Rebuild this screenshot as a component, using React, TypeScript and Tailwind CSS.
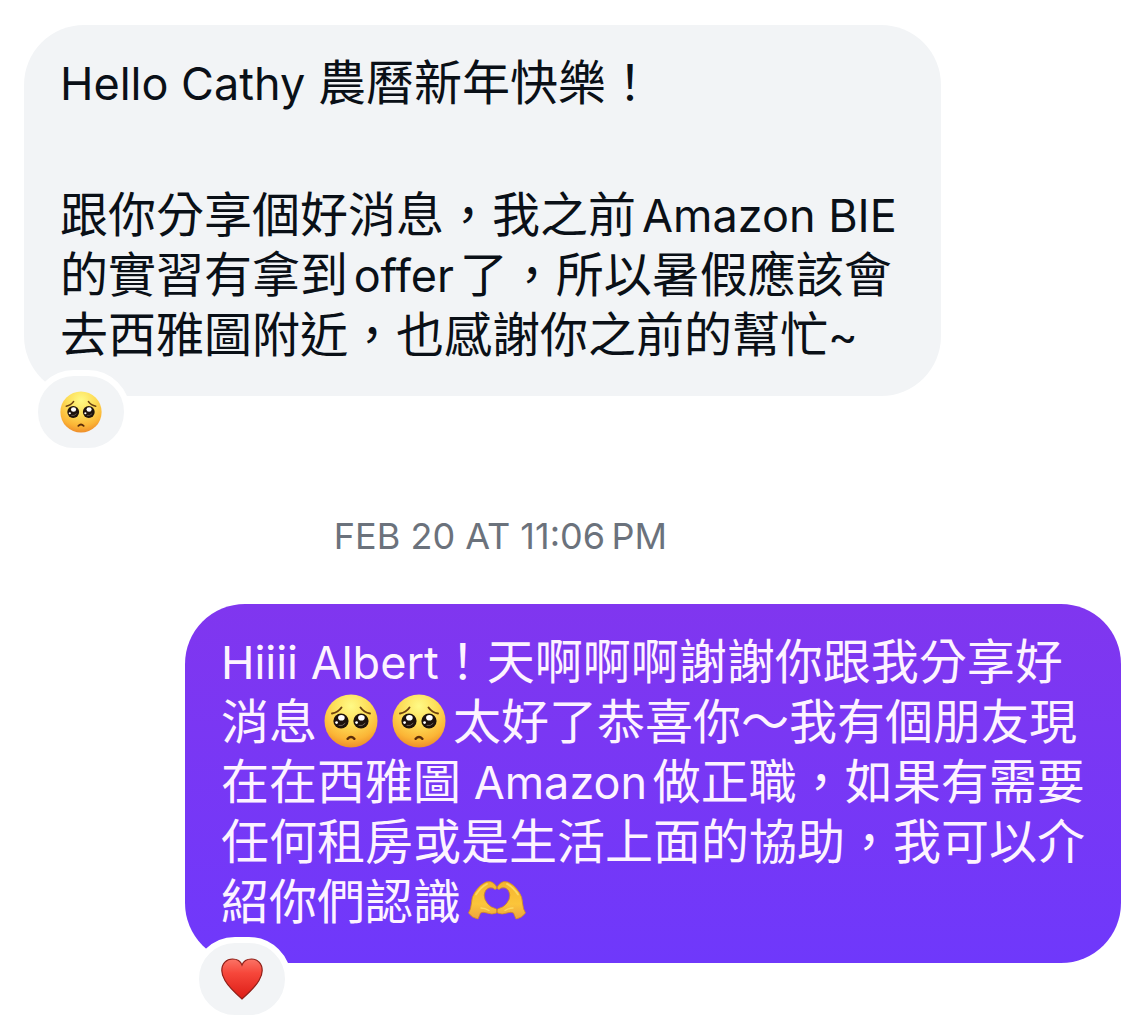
import React from 'react';

const PleadingFace: React.FC<{ className: string }> = ({ className }) => (
  <svg viewBox="0 0 54 54" className={className} role="img" aria-label="pleading face">
    <defs>
      <radialGradient id="face" cx="50%" cy="22%" r="78%">
        <stop offset="0" stopColor="#fffa86" />
        <stop offset="0.45" stopColor="#fddc56" />
        <stop offset="0.8" stopColor="#fbb536" />
        <stop offset="1" stopColor="#ee8d2a" />
      </radialGradient>
    </defs>
    <circle cx="27" cy="27" r="26.5" fill="url(#face)" />
    {/* Brows */}
    <path d="M8 19.5 Q14 18.5 17.5 13.5" stroke="#6b4010" strokeWidth="1.9" fill="none" strokeLinecap="round" />
    <path d="M46 19.5 Q40 18.5 36.5 13.5" stroke="#6b4010" strokeWidth="1.9" fill="none" strokeLinecap="round" />
    {/* Eyes */}
    <circle cx="17" cy="27" r="7.6" fill="#1d120c" />
    <circle cx="37" cy="27" r="7.6" fill="#1d120c" />
    <ellipse cx="17.4" cy="23.8" rx="3.3" ry="2.8" fill="#fff" />
    <ellipse cx="37.4" cy="23.8" rx="3.3" ry="2.8" fill="#fff" />
    <circle cx="12.6" cy="28.6" r="1.4" fill="#fff" />
    <circle cx="32.6" cy="28.6" r="1.4" fill="#fff" />
    <path d="M15 31.5 Q18.5 32.5 21 29.5" stroke="#6e6058" strokeWidth="1" fill="none" strokeLinecap="round" />
    <path d="M35 31.5 Q38.5 32.5 41 29.5" stroke="#6e6058" strokeWidth="1" fill="none" strokeLinecap="round" />
    {/* Mouth */}
    <path d="M23.6 44.8 Q27 41.4 30.4 44.8" stroke="#5a2c0a" strokeWidth="2.4" fill="none" strokeLinecap="round" />
  </svg>
);

const Hand: React.FC = () => (
  <>
    <path
      d="M0.5 33 Q3 29 3.5 23 Q3.5 17 7 12 Q12 4.5 18 2 Q23 0.5 26 3.5 Q29 6 28.7 8.5 Q27 10.5 25 8 Q20.5 6.5 17.5 10.5 Q15 15 17 19.5 Q19.5 25 23.5 27 L28.5 29 Q29.2 31 28.5 33 Q24 35 19 33 Q14.5 31.5 12.5 33 L10 39 Q4 38 0.5 33 Z"
      fill="url(#hand)"
      stroke="#d48a20"
      strokeWidth="0.8"
      strokeLinejoin="round"
    />
    <path d="M8 14.5 Q13 7 19 4" stroke="#fcd960" strokeWidth="1.8" fill="none" strokeLinecap="round" />
    <path d="M13 28 Q17 28 21 30.5" stroke="#fcd960" strokeWidth="1.4" fill="none" strokeLinecap="round" />
  </>
);

const HeartHands: React.FC<{ className: string }> = ({ className }) => (
  <svg viewBox="0 0 58 40" className={className} role="img" aria-label="heart hands">
    <defs>
      <linearGradient id="hand" x1="0" y1="0" x2="0" y2="1">
        <stop offset="0" stopColor="#f5b42e" />
        <stop offset="0.6" stopColor="#fbc53a" />
        <stop offset="1" stopColor="#eda340" />
      </linearGradient>
    </defs>
    <Hand />
    <g transform="translate(58 0) scale(-1 1)">
      <Hand />
    </g>
  </svg>
);

const RedHeart: React.FC<{ className: string }> = ({ className }) => (
  <svg viewBox="0 0 42 42" className={className} role="img" aria-label="red heart">
    <defs>
      <linearGradient id="heart" x1="0" y1="0" x2="0" y2="1">
        <stop offset="0" stopColor="#fb7466" />
        <stop offset="0.35" stopColor="#f6473b" />
        <stop offset="1" stopColor="#dc1c15" />
      </linearGradient>
    </defs>
    <path
      d="M21 41 C16.5 37 8 29.5 4 22.5 C1.6 18.5 0.8 15.5 0.8 12.5 C0.8 5.5 5.5 1 11.5 1 C16 1 19.5 3 21 7 C22.5 3 26 1 30.5 1 C36.5 1 41.2 5.5 41.2 12.5 C41.2 15.5 40.4 18.5 38 22.5 C34 29.5 25.5 37 21 41 Z"
      fill="url(#heart)"
      stroke="#8f2019"
      strokeWidth="1.2"
    />
  </svg>
);

// Latin runs sit a touch smaller than the Chinese text around them
const Latin: React.FC<{ children: React.ReactNode }> = ({ children }) => (
  <span lang="en" className="text-[45px] leading-none">
    {children}
  </span>
);

const Reaction: React.FC<{ children: React.ReactNode }> = ({ children }) => (
  <div className="relative -mt-[26px] ml-2 flex h-[84px] w-[98px] items-center justify-center rounded-full border-[6px] border-white bg-[#f2f4f6]">
    {children}
  </div>
);

const App: React.FC = () => {
  return (
    <main
      lang="zh-Hant"
      className="flex flex-col bg-white px-6 pt-[25px] font-['Inter','Noto_Sans_CJK_TC',sans-serif] text-5xl leading-[60px]"
    >
      {/* Received */}
      <div className="flex flex-col items-start">
        <div className="rounded-[60px] bg-[#f2f4f6] pt-7 pr-11 pb-[31px] pl-9 text-[#0a1017] [text-autospace:normal]">
          <p>
            <Latin>Hello Cathy </Latin>農曆新年快樂！
          </p>
          <p className="mt-[72px]">
            跟你分享個好消息，我之前<Latin>Amazon BIE</Latin>
            <br />
            的實習有拿到<Latin>offer</Latin>了，所以暑假應該會
            <br />
            去西雅圖附近，也感謝你之前的幫忙<Latin>~</Latin>
          </p>
        </div>
        <Reaction>
          <PleadingFace className="size-[42px]" />
        </Reaction>
      </div>

      <time className="mt-[62px] pr-36 text-center text-4xl leading-10 text-[#6b727c]">
        FEB 20 AT 11:06{'\u202f'}PM
      </time>

      {/* Sent */}
      <div className="mt-12 flex flex-col items-start self-end">
        <div className="rounded-[60px] bg-linear-to-b from-[#8036ef] to-[#6f38fb] px-9 pt-7 pb-[31px] text-[#fdf3ff] [text-autospace:normal]">
          <p>
            <Latin>Hiiii Albert</Latin>！天啊啊啊謝謝你跟我分享好
            <br />
            消息
            <PleadingFace className="mx-[7px] inline size-[54px] align-[-9px]" />
            <PleadingFace className="mx-[7px] inline size-[54px] align-[-9px]" />
            太好了恭喜你～我有個朋友現
            <br />
            在在西雅圖<Latin> Amazon</Latin>做正職，如果有需要
            <br />
            任何租房或是生活上面的協助，我可以介
            <br />
            紹你們認識
            <HeartHands className="mx-[7px] inline h-10 w-[58px] align-[-1px]" />
          </p>
        </div>
        <Reaction>
          <RedHeart className="size-[42px]" />
        </Reaction>
      </div>
    </main>
  );
};

export default App;
